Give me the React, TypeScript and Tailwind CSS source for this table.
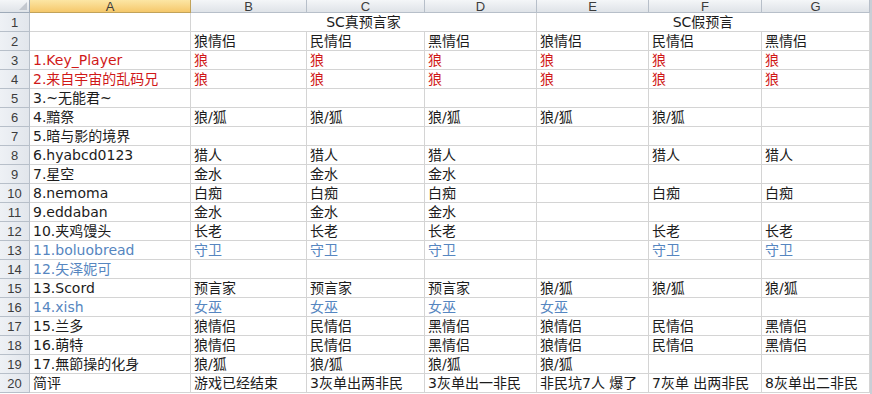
import React from 'react';

type Tone = 'k' | 'r' | 'b';

const cols = ['A', 'B', 'C', 'D', 'E', 'F', 'G'];

// [name, tone, ...cells]
const rows: { name: string; tone: Tone; cells: string[]; cellTone?: Tone }[] = [
  { name: '', tone: 'k', cells: ['狼情侣', '民情侣', '黑情侣', '狼情侣', '民情侣', '黑情侣'] },
  { name: '1.Key_Player', tone: 'r', cells: ['狼', '狼', '狼', '狼', '狼', '狼'], cellTone: 'r' },
  { name: '2.来自宇宙的乱码兄', tone: 'r', cells: ['狼', '狼', '狼', '狼', '狼', '狼'], cellTone: 'r' },
  { name: '3.~无能君~', tone: 'k', cells: ['', '', '', '', '', ''] },
  { name: '4.黯祭', tone: 'k', cells: ['狼/狐', '狼/狐', '狼/狐', '狼/狐', '狼/狐', ''] },
  { name: '5.暗与影的境界', tone: 'k', cells: ['', '', '', '', '', ''] },
  { name: '6.hyabcd0123', tone: 'k', cells: ['猎人', '猎人', '猎人', '', '猎人', '猎人'] },
  { name: '7.星空', tone: 'k', cells: ['金水', '金水', '金水', '', '', ''] },
  { name: '8.nemoma', tone: 'k', cells: ['白痴', '白痴', '白痴', '', '白痴', '白痴'] },
  { name: '9.eddaban', tone: 'k', cells: ['金水', '金水', '金水', '', '', ''] },
  { name: '10.夹鸡馒头', tone: 'k', cells: ['长老', '长老', '长老', '', '长老', '长老'] },
  { name: '11.boluobread', tone: 'b', cells: ['守卫', '守卫', '守卫', '', '守卫', '守卫'], cellTone: 'b' },
  { name: '12.矢泽妮可', tone: 'b', cells: ['', '', '', '', '', ''] },
  { name: '13.Scord', tone: 'k', cells: ['预言家', '预言家', '预言家', '狼/狐', '狼/狐', '狼/狐'] },
  { name: '14.xish', tone: 'b', cells: ['女巫', '女巫', '女巫', '女巫', '', ''], cellTone: 'b' },
  { name: '15.兰多', tone: 'k', cells: ['狼情侣', '民情侣', '黑情侣', '狼情侣', '民情侣', '黑情侣'] },
  { name: '16.萌特', tone: 'k', cells: ['狼情侣', '民情侣', '黑情侣', '狼情侣', '民情侣', '黑情侣'] },
  { name: '17.無節操的化身', tone: 'k', cells: ['狼/狐', '狼/狐', '狼/狐', '狼/狐', '', ''] },
  { name: '简评', tone: 'k', cells: ['游戏已经结束', '3灰单出两非民', '3灰单出一非民', '非民坑7人 爆了', '7灰单 出两非民', '8灰单出二非民'] },
];

const toneClass: Record<Tone, string> = {
  k: 'text-[#1c1c1c]',
  r: 'text-[#d01818]',
  b: 'text-[#5686c0]',
};

const font = { fontFamily: '"DejaVu Sans", "Noto Sans CJK SC", sans-serif' };

function Cell({ text, tone }: { text: string; tone: Tone }) {
  return (
    <div
      className={`h-[19px] border-r border-b border-[#d4d4d4] bg-white flex items-end pl-[3px] overflow-hidden whitespace-nowrap text-[14px] leading-[17px] ${toneClass[tone]}`}
    >
      {text}
    </div>
  );
}

export default function App() {
  return (
    <div className="w-[872px] h-[394px] bg-white flex overflow-hidden" style={font}>
      <div className="grid grid-cols-[30px_161px_116px_118px_112px_112px_113px_108px] grid-rows-[13px] auto-rows-[19px] w-[870px]">
        {/* column headers */}
        <div className="border-r border-b border-[#9eaab8] bg-linear-to-b from-[#f4f6f8] to-[#dfe3e8] relative">
          <div className="absolute right-[2px] bottom-[2px] w-0 h-0 border-l-[8px] border-l-transparent border-b-[8px] border-b-[#c3c8cf]" />
        </div>
        {cols.map(c => (
          <div
            key={c}
            className={`border-r border-b flex items-center justify-center text-[13px] leading-none text-[#3c3c3c] ${
              c === 'A'
                ? 'bg-linear-to-b from-[#fce6a4] to-[#f5c86a] border-[#c2a35a]'
                : 'bg-linear-to-b from-[#f4f6f8] to-[#dfe3e8] border-[#b7bfc9]'
            }`}
            style={{ fontFamily: '"Liberation Sans", sans-serif' }}
          >
            {c}
          </div>
        ))}

        {/* row 1 with merged headers */}
        <RowHead n={1} />
        <Cell text="" tone="k" />
        <div className="col-span-3 border-r border-b border-[#d4d4d4] flex items-end justify-center text-[14px] leading-[17px] text-[#1c1c1c]">
          SC真预言家
        </div>
        <div className="col-span-3 border-r border-b border-[#d4d4d4] flex items-end justify-center text-[14px] leading-[17px] text-[#1c1c1c]">
          SC假预言
        </div>

        {rows.map((r, i) => (
          <React.Fragment key={i}>
            <RowHead n={i + 2} />
            <Cell text={r.name} tone={r.tone} />
            {r.cells.map((t, j) => (
              <Cell key={j} text={t} tone={r.cellTone ?? 'k'} />
            ))}
          </React.Fragment>
        ))}
      </div>
      <div className="w-[2px] bg-[#c9ced6]" />
    </div>
  );
}

function RowHead({ n }: { n: number }) {
  return (
    <div
      className="h-[19px] border-r border-b border-[#b7bfc9] bg-linear-to-r from-[#eef1f5] to-[#e2e6ec] flex items-center justify-center text-[13px] leading-none text-[#3c3c3c]"
      style={{ fontFamily: '"Liberation Sans", sans-serif' }}
    >
      {n}
    </div>
  );
}
